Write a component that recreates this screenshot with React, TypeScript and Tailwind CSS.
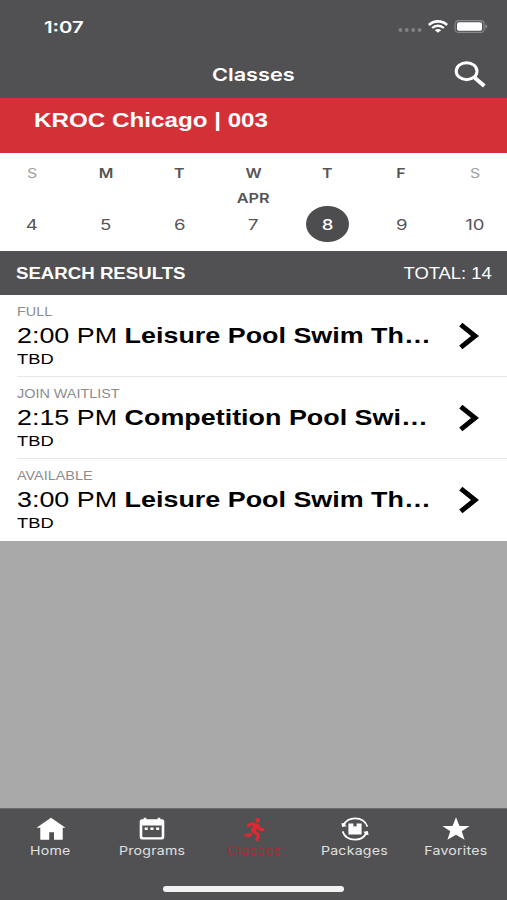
import React from "react";
import { FaRunning } from "react-icons/fa";

const inter = "font-[Inter,sans-serif]";
const helv = "font-['Liberation_Sans',Arial,sans-serif]";

function Wide({ className = "", children }: { className?: string; children: React.ReactNode }) {
  return <span className={`inline-block whitespace-nowrap ${className}`}>{children}</span>;
}

const days = [
  { d: "S", n: "4", weekend: true },
  { d: "M", n: "5" },
  { d: "T", n: "6" },
  { d: "W", n: "7", month: "APR" },
  { d: "T", n: "8", selected: true },
  { d: "F", n: "9" },
  { d: "S", n: "10", weekend: true },
];

const classes = [
  { status: "FULL", time: "2:00 PM", name: "Leisure Pool Swim Th…", who: "TBD" },
  { status: "JOIN WAITLIST", time: "2:15 PM", name: "Competition Pool Swi…", who: "TBD" },
  { status: "AVAILABLE", time: "3:00 PM", name: "Leisure Pool Swim Th…", who: "TBD" },
];

function HomeIcon() {
  return (
    <svg width="30" height="24" viewBox="0 0 30 24" fill="#fff">
      <path d="M15 .8 L29.5 10.7 H26.7 V22.8 H18 V15.2 H13.2 V22.8 H4.3 V10.7 H.5 Z" />
    </svg>
  );
}

function CalendarIcon() {
  return (
    <svg width="26" height="24" viewBox="0 0 26 24">
      <path
        fill="#fff"
        fillRule="evenodd"
        d="M3 2.3 H4.7 V.8 H7.3 V2.3 H18.7 V.8 H21.3 V2.3 H23 Q25.3 2.3 25.3 4.5 V20.3 Q25.3 22.5 23 22.5 H3 Q.7 22.5 .7 20.3 V4.5 Q.7 2.3 3 2.3 Z M3.3 8.4 V19.3 Q3.3 20.2 4.3 20.2 H21.7 Q22.7 20.2 22.7 19.3 V8.4 Z"
      />
      <path fill="#fff" d="M5.7 10.6h3.1v2.5H5.7zM11.4 10.6h3.1v2.5h-3.1zM17.1 10.6h3.1v2.5h-3.1z" />
    </svg>
  );
}

function PackagesIcon() {
  return (
    <svg width="28" height="24" viewBox="0 0 28 24" fill="none">
      <path d="M2.6 8 C5 3.3 9.4 1.3 14 1.3 C19 1.3 24.4 3.8 26.4 9.6" stroke="#fff" strokeWidth="1.7" />
      <path d="M25.4 16 C23 20.7 18.6 22.7 14 22.7 C9 22.7 3.6 20.2 1.6 14.4" stroke="#fff" strokeWidth="1.7" />
      <path d="M.4 6.2 L1.2 10 L5.4 9.2 L3.4 6 Z M27.6 17.8 L26.8 14 L22.6 14.8 L24.6 18 Z" fill="#fff" />
      <path d="M7.4 6.4 H12.4 V9.8 L14 8.9 L15.6 9.8 V6.4 H20.6 V17.6 H7.4 Z" fill="#fff" />
    </svg>
  );
}

function StarIcon() {
  return (
    <svg width="28" height="24" viewBox="0 0 28 24" fill="#fff">
      <path d="M14 .3 L17.5 9 H27.6 L19.7 14.3 L22.6 22.8 L14 17.8 L5.4 22.8 L8.3 14.3 L.4 9 H10.5 Z" />
    </svg>
  );
}

const tabs = [
  { label: "Home", icon: <HomeIcon /> },
  { label: "Programs", icon: <CalendarIcon /> },
  { label: "Classes", icon: <FaRunning className="ml-[2px] size-[23px] scale-x-[1.1]" />, active: true },
  { label: "Packages", icon: <PackagesIcon /> },
  { label: "Favorites", icon: <StarIcon /> },
];

export default function App() {
  return (
    <div className={`flex h-[900px] w-[507px] flex-col overflow-hidden bg-[#a9a9a9] ${helv}`}>
      <header className={`flex h-[98px] flex-col bg-[#515153] text-white ${inter}`}>
        <div className="flex h-[50px] items-center justify-between pt-[3px] pr-[19px] pl-[44px]">
          <Wide className="origin-left scale-x-[1.27] text-[16px] font-semibold">1:07</Wide>
          <div className="flex items-center">
            <svg width="24" height="4" viewBox="0 0 24 4" fill="#818183" className="mt-[7px]">
              <circle cx="2.4" cy="2" r="1.9" />
              <circle cx="8.8" cy="2" r="1.9" />
              <circle cx="15.2" cy="2" r="1.9" />
              <circle cx="21.6" cy="2" r="1.9" />
            </svg>
            <svg width="20" height="13" viewBox="0 0 20 13" fill="none" className="ml-[6px]">
              <path d="M.9 4.9 C6 .2 14 .2 19.1 4.9" stroke="#fff" strokeWidth="2.7" />
              <path d="M4.1 8 C7.5 5 12.5 5 15.9 8" stroke="#fff" strokeWidth="2.3" />
              <path d="M6.8 10.2 C8.6 8.6 11.4 8.6 13.2 10.2 L10 12.8 Z" fill="#fff" />
            </svg>
            <svg width="34" height="13" viewBox="0 0 34 13" fill="none" className="ml-[6px]">
              <rect x="1" y=".6" width="29" height="11.8" rx="3.2" stroke="#8a8a8c" strokeWidth="1.1" />
              <rect x="3" y="2.3" width="25" height="8.4" rx="1.6" fill="#fff" />
              <path d="M31.3 4.3 Q33.4 5 33.4 6.5 Q33.4 8 31.3 8.7 Z" fill="#8a8a8c" />
            </svg>
          </div>
        </div>
        <div className="grid h-[48px] grid-cols-[1fr_auto_1fr] items-center pr-[21px] pl-[20px]">
          <span />
          <Wide className="mt-[2px] scale-x-[1.24] text-[17.5px] font-semibold">Classes</Wide>
          <svg width="32" height="27" viewBox="0 0 32 27" fill="none" className="justify-self-end">
            <ellipse cx="12.6" cy="10.2" rx="10.4" ry="8.5" stroke="#fff" strokeWidth="3" />
            <path d="M20.2 16.2 L30.3 24.9" stroke="#fff" strokeWidth="4" />
          </svg>
        </div>
      </header>

      <div className="h-[55px] bg-[#d33038] pt-[10px] pl-[34px] text-white">
        <Wide className="origin-left scale-x-[1.21] text-[20px] leading-6 font-bold">KROC Chicago | 003</Wide>
      </div>

      <div className={`-mx-[5px] grid h-[98px] grid-cols-7 bg-white ${inter} text-[#555557]`}>
        {days.map((x, i) => (
          <div key={i} className="flex flex-col items-center pt-[12px]">
            <Wide className={`scale-x-[1.22] text-[13px] leading-4 ${x.weekend ? "text-[#9c9c9e]" : "font-semibold"}`}>
              {x.d}
            </Wide>
            <div className="flex h-[25px] items-center pt-[8px]">
              {x.month && <Wide className="scale-x-[1.25] text-[13px] leading-4 font-semibold">{x.month}</Wide>}
            </div>
            <div
              className={`flex h-[36px] w-[43px] items-center justify-center rounded-[50%] pt-[1px] ${
                x.selected ? "bg-[#4d4d4f] text-white" : ""
              }`}
            >
              <Wide className={`scale-x-[1.24] text-[15px] leading-5 ${x.selected ? "font-medium" : ""}`}>{x.n}</Wide>
            </div>
          </div>
        ))}
      </div>

      <div className="flex h-[44px] items-center justify-between bg-[#515153] pt-[2px] pr-[15px] pl-[16px] text-white">
        <Wide className="origin-left scale-x-[1.165] text-[16px] font-bold">SEARCH RESULTS</Wide>
        <Wide className="origin-right scale-x-[1.15] text-[16px]">TOTAL: 14</Wide>
      </div>

      <main className="bg-white">
        {classes.map((c, i) => (
          <article key={c.status} className="h-[82px] pl-[17px]">
            <div
              className={`flex h-full items-start justify-between pr-[28px] ${
                i < classes.length - 1 ? "border-b border-[#e8e8e8]" : ""
              }`}
            >
              <div className="flex flex-col items-start pt-[9px] text-black">
                <Wide className="origin-left scale-x-[1.2] text-[12px] leading-[16px] text-[#8c8c8c]">{c.status}</Wide>
                <Wide className="origin-left scale-x-[1.222] text-[22px] leading-[31px]">
                  {c.time} <b>{c.name}</b>
                </Wide>
                <Wide className="origin-left scale-x-[1.22] text-[15px] leading-[16px]">{c.who}</Wide>
              </div>
              <svg width="20" height="28" viewBox="0 0 20 28" fill="none" className="mt-[27px]">
                <path d="M1.8 2.6 L16 14 L1.8 25.4" stroke="#000" strokeWidth="5" />
              </svg>
            </div>
          </article>
        ))}
      </main>

      <footer className={`mt-auto flex h-[92px] flex-col border-t border-[#6a6a6c] bg-[#515153] ${inter}`}>
        <nav className="grid grid-cols-5 pt-[8px]">
          {tabs.map((t) => (
            <div
              key={t.label}
              className={`flex flex-col items-center ${t.active ? "text-[#dc2a30]" : "text-[#e0e0e0]"}`}
            >
              <div className="flex h-[24px] items-center">{t.icon}</div>
              <Wide
                className={`mt-[2px] scale-x-[1.18] text-[12px] leading-4 tracking-[0.2px] ${
                  t.active ? "text-[#ac2b34]" : ""
                }`}
              >
                {t.label}
              </Wide>
            </div>
          ))}
        </nav>
        <div className="mt-[27px] h-[6px] w-[181px] self-center rounded-full bg-[#f2f2f2]" />
      </footer>
    </div>
  );
}
